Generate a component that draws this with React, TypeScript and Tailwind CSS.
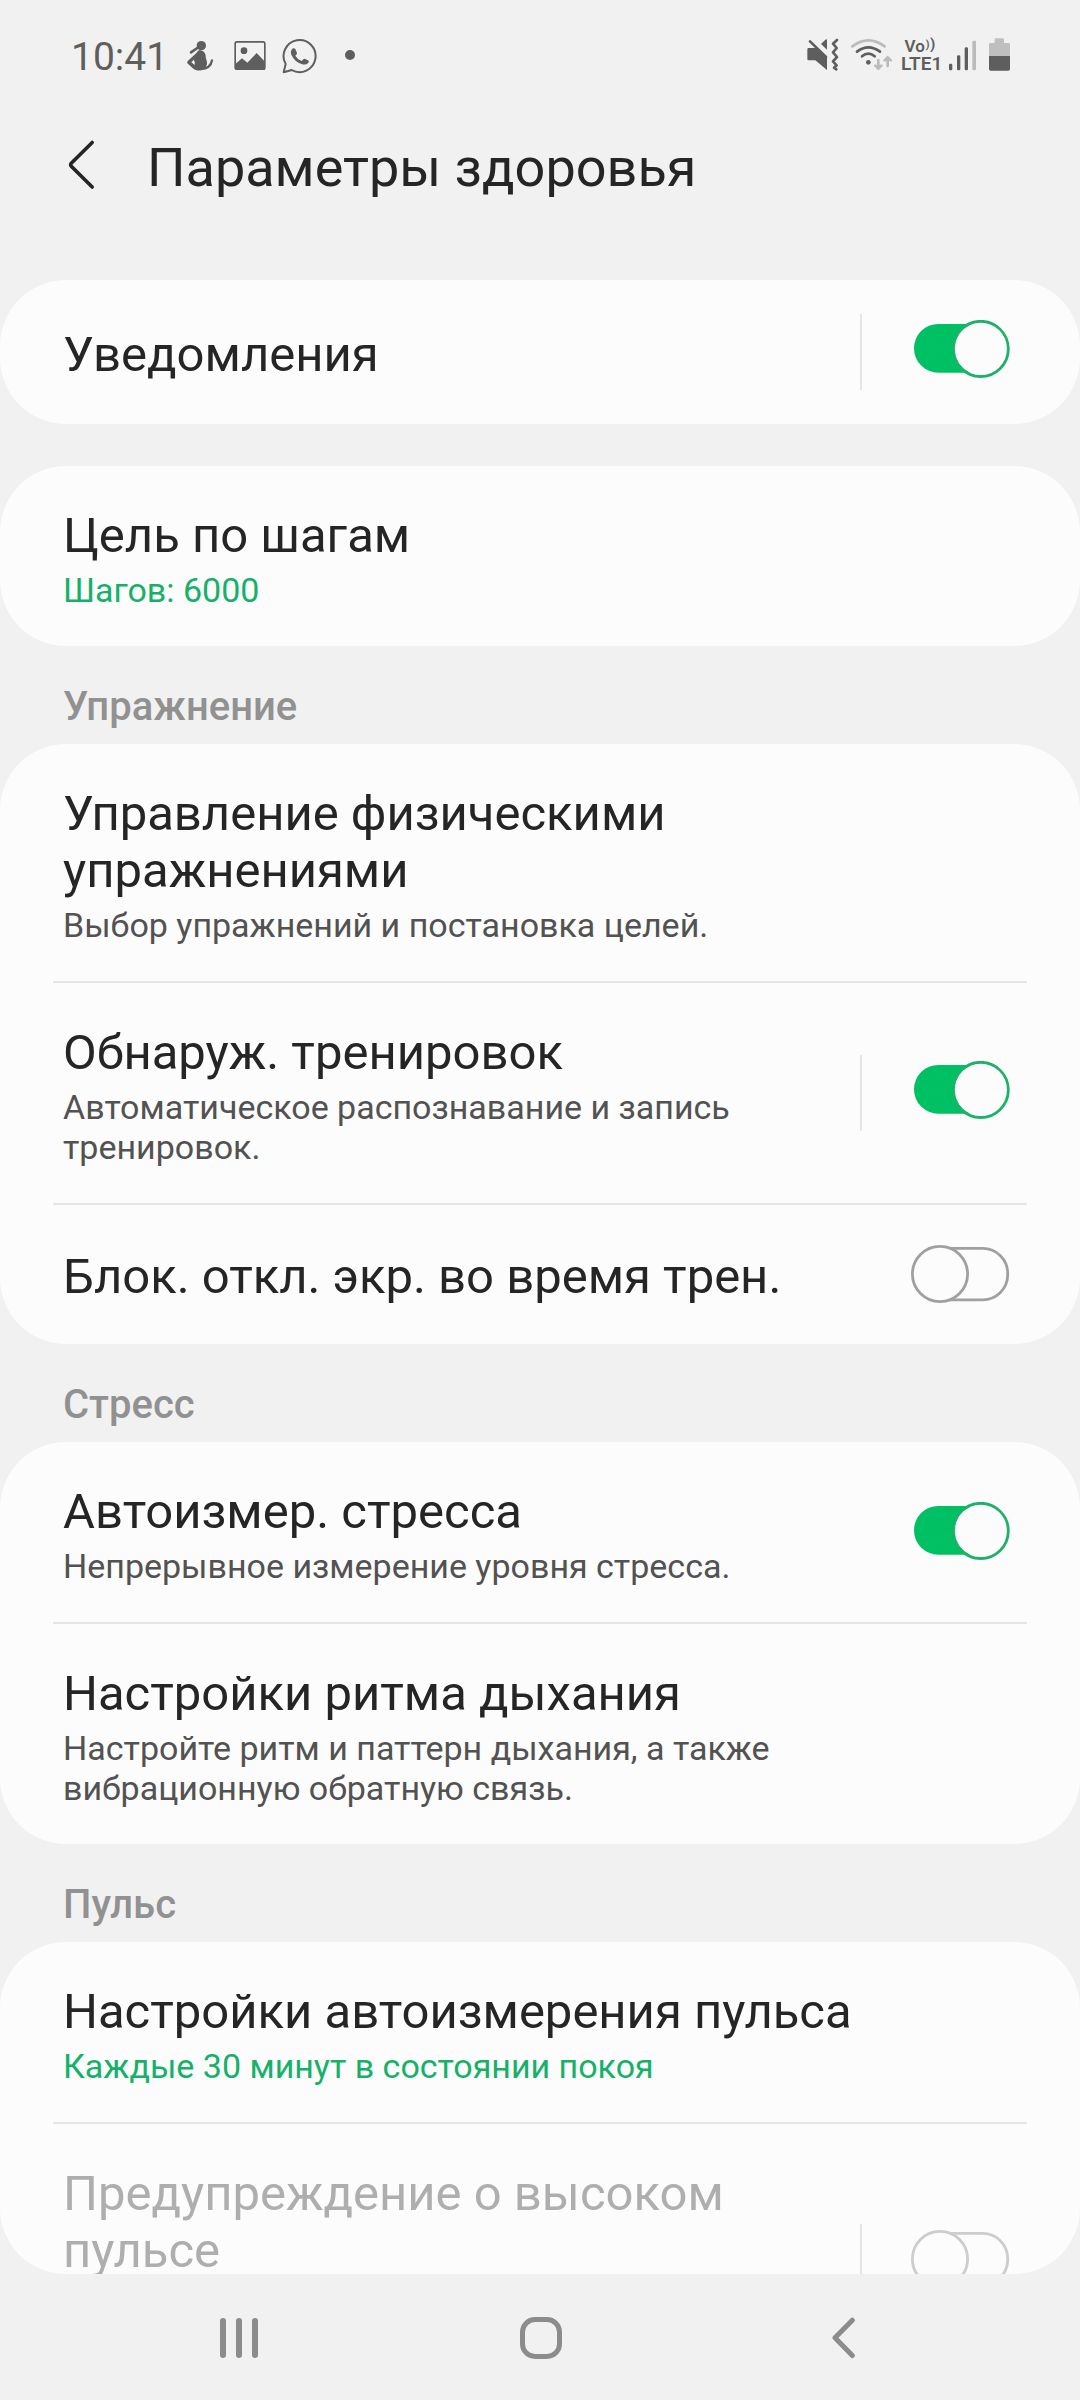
import type { ReactNode } from "react";

type SwitchState = "on" | "off" | "disabled";

function Toggle({ state }: { state: SwitchState }) {
  if (state === "on") {
    return (
      <svg className="h-[60px] w-[100px] shrink-0" viewBox="0 0 100 60" fill="none">
        <rect x="3" y="4" width="88" height="48.7" rx="24.3" fill="#00c064" />
        <circle cx="69.7" cy="28.9" r="27.6" fill="#fcfcfc" stroke="#1fb169" strokeWidth="2.8" />
        <path d="M59 4.3A26.8 26.8 0 0 0 59 53.2" stroke="#00c064" strokeWidth="1" />
      </svg>
    );
  }
  const color = state === "off" ? "#a0a0a0" : "#cdcdcd";
  return (
    <svg className="h-[60px] w-[100px] shrink-0" viewBox="0 0 100 60" fill="none">
      <rect x="8" y="3.4" width="88.7" height="51.4" rx="25" stroke={color} strokeWidth="2.8" />
      <circle cx="29" cy="29" r="27.6" fill="#fcfcfc" stroke={color} strokeWidth="2.8" />
    </svg>
  );
}

function Row({
  title,
  sub,
  green,
  toggle,
  split,
  className = "",
}: {
  title: string;
  sub?: string;
  green?: boolean;
  toggle?: SwitchState;
  split?: boolean;
  className?: string;
}) {
  const disabled = toggle === "disabled";
  return (
    <div className={`flex pl-[63px] ${toggle ? "pr-[69px]" : "pr-[160px]"} ${className}`}>
      <div className={`flex-1 ${sub || disabled ? "pt-[41px] pb-[36px]" : "self-center pt-[4px]"}`}>
        <div
          className={`text-[49px] leading-[57px] ${disabled ? "text-[#aeaeae]" : "text-[#252525]"}`}
        >
          {title}
        </div>
        {sub && (
          <div
            className={`mt-[6px] text-[34px] leading-[40px] ${green ? "text-[#16b169]" : "text-[#525252]"}`}
          >
            {sub}
          </div>
        )}
      </div>
      {toggle && (
        <div className="flex items-center">
          {split && <div className="mr-[49px] h-[76px] w-[2px] bg-[#e5e5e5]" />}
          <div className={split ? "mb-[4px] h-[60px]" : "h-[60px]"}>
            <Toggle state={toggle} />
          </div>
        </div>
      )}
    </div>
  );
}

function Card({ children, className = "" }: { children: ReactNode; className?: string }) {
  return (
    <section className={`shrink-0 overflow-hidden rounded-[66px] bg-[#fcfcfc] ${className}`}>
      {children}
    </section>
  );
}

function Divider() {
  return <div className="mr-[53px] ml-[53px] h-[2px] bg-[#e5e5e5]" />;
}

function Heading({ children }: { children: ReactNode }) {
  return (
    <h2 className="h-[98px] shrink-0 pt-[37px] pl-[63px] text-[40px] leading-[47px] font-medium text-[#919191]">
      {children}
    </h2>
  );
}

function StatusBar() {
  return (
    <div className="flex h-[110px] items-start pt-[38px] pl-[71px] text-[#5e5e5e]">
      <span className="mt-[1px] w-[114.500px] text-[39px] leading-[36px]">10:41</span>
      <svg className="h-[34px] w-[29px]" viewBox="438 54 87 102" fill="none">
        <circle cx="484" cy="77" r="14" fill="#5e5e5e" />
        <path d="M472 84L453 97" stroke="#5e5e5e" strokeWidth="8" strokeLinecap="round" />
        <path
          d="M474 92C484 88 497 96 497 108C497 120 506 128 498 140C492 152 472 155 460 146L442 130Q440 126 444 122L470 98ZM461 119L454 127L464 135Q467 127 461 119Z"
          fill="#5e5e5e"
          fillRule="evenodd"
        />
        <path d="M482 147Q512 146 516 121" stroke="#5e5e5e" strokeWidth="7" strokeLinecap="round" />
      </svg>
      <svg className="ml-[19px] h-[34px] w-[32px]" viewBox="582 54 96 102" fill="none">
        <rect x="585.500" y="65.500" width="89" height="82" rx="5" stroke="#5e5e5e" strokeWidth="5" />
        <circle cx="612" cy="92" r="10" fill="#5e5e5e" />
        <path d="M586 132L606 115L622 128L650 99L675 125V149H586Z" fill="#5e5e5e" />
      </svg>
      <svg className="ml-[16.500px] h-[36px] w-[36px]" viewBox="727 53 108 108" fill="none">
        <path
          d="M732 156L738 131A48 48 0 1 1 756 149Z"
          stroke="#5e5e5e"
          strokeWidth="6"
          strokeLinejoin="round"
        />
        <path
          d="M757 86Q762 81 767 86L772 98Q773 101 767 106Q773 117 786 122L792 116Q794 115 797 116L807 121Q809 123 806 127Q800 135 788 132Q764 124 755 103Q751 94 757 86Z"
          fill="#5e5e5e"
        />
      </svg>
      <div className="mt-[12px] ml-[27px] h-[10px] w-[10px] rounded-full bg-[#5e5e5e]" />

      <svg className="ml-[451px] h-[34px] w-[34px]" viewBox="78 54 102 102" fill="none">
        <path d="M86 84H110L141 114V150L106 121H86Q82 121 82 117V88Q82 84 86 84Z" fill="#5e5e5e" />
        <path d="M90 64L138 111" stroke="#5e5e5e" strokeWidth="8" strokeLinecap="round" />
        <path d="M123 72L136 59Q141 56 141 61V89Z" fill="#5e5e5e" />
        <path
          d="M171 60L159 71L170 84L159 97L171 111L159 124L170 136L162 143L169 148"
          stroke="#5e5e5e"
          strokeWidth="8"
          strokeLinecap="round"
          strokeLinejoin="round"
        />
      </svg>
      <svg className="ml-[10px] h-[34px] w-[42px]" viewBox="210 54 126 102" fill="none" strokeLinecap="round">
        <path d="M217 79Q265 43 314 79" stroke="#bbbbbb" strokeWidth="8" />
        <path d="M231 95Q265 69 300 95" stroke="#5e5e5e" strokeWidth="8" />
        <path d="M246 109Q265 93 284 109" stroke="#5e5e5e" strokeWidth="8" />
        <circle cx="265" cy="127" r="7" fill="#5e5e5e" />
        <path
          d="M295 120V145M286 137L295 146L304 137M323 138V113M314 121L323 112L332 121"
          stroke="#bbbbbb"
          strokeWidth="8"
        />
      </svg>
      <div className="ml-[9px] w-[42px] font-semibold whitespace-nowrap">
        <div className="flex h-[17px] pl-[3.500px] text-[17px] leading-[16px]">
          Vo
          <span className="-mt-[1px] ml-[1px] text-[10.500px] leading-[15px] font-bold">)</span>
          <span className="ml-[0.500px] text-[15px] leading-[12px] font-bold">)</span>
        </div>
        <div className="text-[19px] leading-[18px]">LTE1</div>
      </div>
      <svg className="ml-[3.500px] h-[34px] w-[30px]" viewBox="498 54 90 102">
        <rect x="504" y="131" width="10" height="20" rx="4" fill="#5e5e5e" />
        <rect x="528" y="106" width="10" height="45" rx="4" fill="#5e5e5e" />
        <rect x="551" y="82" width="10" height="69" rx="4" fill="#5e5e5e" />
        <rect x="574" y="62" width="11" height="89" rx="4" fill="#bbbbbb" />
      </svg>
      <svg className="ml-[11.500px] h-[34px] w-[23px]" viewBox="624 54 69 102">
        <path d="M648 55H668Q672 55 672 59V69H686Q690 69 690 73V108H627V73Q627 69 631 69H644V59Q644 55 648 55Z" fill="#bfbfbf" />
        <path d="M627 108H690V147Q690 152 685 152H632Q627 152 627 147Z" fill="#5e5e5e" />
      </svg>
    </div>
  );
}

export default function App() {
  return (
    <div className="flex h-[2400px] w-[1080px] flex-col overflow-hidden bg-[#f1f1f1] font-['Roboto',sans-serif]">
      <StatusBar />
      <header className="flex h-[170px] items-start pl-[66px]">
        <svg className="mt-[28px] h-[54px] w-[30px]" viewBox="0 0 30 54" fill="none">
          <path
            d="M26.200 4.500L5.300 25.100Q4 26.700 5.300 28.200L26.200 49"
            stroke="#252525"
            strokeWidth="3.600"
            strokeLinecap="round"
          />
        </svg>
        <h1 className="mt-[26px] ml-[51px] text-[54px] leading-[64px] text-[#252525]">
          Параметры здоровья
        </h1>
      </header>

      <main className="flex h-[1994px] flex-col overflow-hidden rounded-b-[66px]">
        <Card>
          <Row title="Уведомления" toggle="on" split className="h-[144px]" />
        </Card>
        <Card className="mt-[42px]">
          <Row title="Цель по шагам" sub="Шагов: 6000" green />
        </Card>

        <Heading>Упражнение</Heading>
        <Card>
          <Row title="Управление физическими упражнениями" sub="Выбор упражнений и постановка целей." />
          <Divider />
          <Row
            title="Обнаруж. тренировок"
            sub="Автоматическое распознавание и запись тренировок."
            toggle="on"
            split
          />
          <Divider />
          <Row title="Блок. откл. экр. во время трен." toggle="off" className="h-[139px]" />
        </Card>

        <Heading>Стресс</Heading>
        <Card>
          <Row title="Автоизмер. стресса" sub="Непрерывное измерение уровня стресса." toggle="on" />
          <Divider />
          <Row
            title="Настройки ритма дыхания"
            sub="Настройте ритм и паттерн дыхания, а также вибрационную обратную связь."
          />
        </Card>

        <Heading>Пульс</Heading>
        <Card>
          <Row title="Настройки автоизмерения пульса" sub="Каждые 30 минут в состоянии покоя" green />
          <Divider />
          <Row
            title="Предупреждение о высоком пульсе"
            toggle="disabled"
            split
            className="h-[276px]"
          />
        </Card>
      </main>

      <nav className="flex h-[126px] items-start pt-[43px] pl-[220px]">
        <div className="mt-[1px] flex gap-[10.500px]">
          <div className="h-[40px] w-[5.500px] rounded-full bg-[#8c8c8c]" />
          <div className="h-[40px] w-[5.500px] rounded-full bg-[#8c8c8c]" />
          <div className="h-[40px] w-[5.500px] rounded-full bg-[#8c8c8c]" />
        </div>
        <div className="ml-[262px] h-[42px] w-[42px] rounded-[15px] border-[5px] border-[#8c8c8c]" />
        <svg className="ml-[268px] h-[42px] w-[27px]" viewBox="0 0 27 42" fill="none">
          <path
            d="M22.300 3.200L5 20.800L22.300 38.500"
            stroke="#8c8c8c"
            strokeWidth="5"
            strokeLinecap="round"
            strokeLinejoin="round"
          />
        </svg>
      </nav>
    </div>
  );
}
